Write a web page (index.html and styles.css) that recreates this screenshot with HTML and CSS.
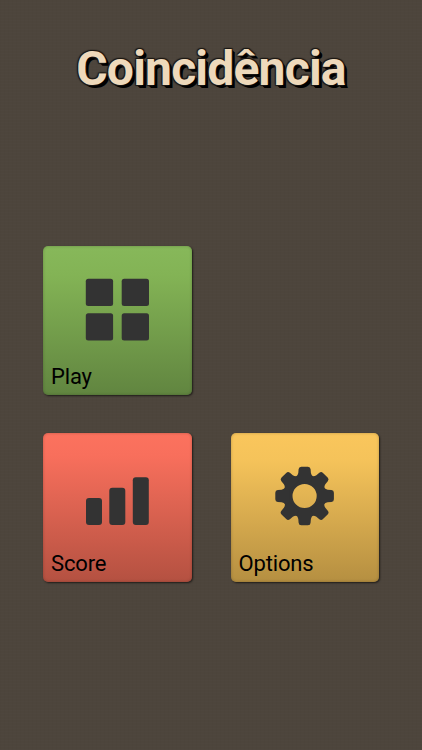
FILE: index.html
```
<!DOCTYPE html>
<html lang="pt">
<head>
  <meta charset="UTF-8">
  <title>Coincidência</title>
  <meta name="viewport" content="width=device-width, initial-scale=1">
  <link rel="stylesheet" href="styles.css">
</head>
<body>
  <h1 class="title">Coincidência</h1>
  <nav class="menu">
    <a class="tile play">
      <svg class="icon" viewBox="0 0 68 68">
        <rect x="2.8" y="5.8" width="27.3" height="27.3" rx="2.5"/>
        <rect x="38.7" y="5.8" width="27.3" height="27.3" rx="2.5"/>
        <rect x="2.8" y="40.2" width="27.3" height="27.3" rx="2.5"/>
        <rect x="38.7" y="40.2" width="27.3" height="27.3" rx="2.5"/>
      </svg>
      <span class="label">Play</span>
    </a>
    <a class="tile score">
      <svg class="icon" viewBox="0 0 68 68">
        <rect x="3" y="38" width="16" height="27" rx="3"/>
        <rect x="26.3" y="27.8" width="16" height="37.2" rx="3"/>
        <rect x="49.8" y="17.3" width="16" height="47.7" rx="3"/>
      </svg>
      <span class="label">Score</span>
    </a>
    <a class="tile options">
      <svg class="icon" viewBox="0 0 68 68">
        <defs>
          <path id="tooth" d="M-6 -26.8Q-5.8 -29.3 -3.3 -29.3H3.3Q5.8 -29.3 6 -26.8L6.3 -23Q6.6 -20.6 9 -19L6 -15H-6L-9 -19Q-6.6 -20.6 -6.3 -23Z"/>
        </defs>
        <g transform="translate(33.6 36)">
          <circle class="ring" r="16.4"/>
          <use href="#tooth"/>
          <use href="#tooth" transform="rotate(45)"/>
          <use href="#tooth" transform="rotate(90)"/>
          <use href="#tooth" transform="rotate(135)"/>
          <use href="#tooth" transform="rotate(180)"/>
          <use href="#tooth" transform="rotate(225)"/>
          <use href="#tooth" transform="rotate(270)"/>
          <use href="#tooth" transform="rotate(315)"/>
        </g>
      </svg>
      <span class="label">Options</span>
    </a>
  </nav>
</body>
</html>
```

FILE: styles.css
```
* { box-sizing: border-box; }
body {
  margin: 0; height: 750px; overflow: hidden; font-family: Roboto, "Open Sans", sans-serif;
  background-color: #4d453c;
  /* faint paper weave */
  background-image:
    repeating-linear-gradient(0deg, rgba(255,255,255,0.008) 0 1px, transparent 1px 3px),
    repeating-linear-gradient(90deg, rgba(0,0,0,0.012) 0 1px, transparent 1px 4px);
}
.title {
  margin: 0; padding-top: 41px; height: 246px; text-align: center;
  font-size: 48px; line-height: 56px; font-weight: bold; letter-spacing: -0.8px; color: #eed9bb;
  text-shadow: -1px -1px 1px #1c1814, 1px -1px 1px #1c1814, -1px 1px 1px #1c1814, 1px 1px 0 #000, 2px 2px 0 #000, 3px 3px 0 #000;
}
.menu { display: grid; grid-template-columns: 149px 148.5px; grid-auto-rows: 148.5px; column-gap: 38.5px; row-gap: 38.5px; padding-left: 43px; }
.tile {
  display: flex; flex-direction: column; justify-content: space-between; padding: 27px 8px 5px;
  border-radius: 5px; color: #000;
  box-shadow: 1px 1px 2px rgba(0,0,0,0.6), inset 0 0 3px rgba(0,0,0,0.25);
}
.play { background: linear-gradient(#87b85a, #83b355 20%, #618540); }
.score { grid-column: 1; background: linear-gradient(#fc725e, #f86f5c 15%, #b45141); }
.options { background: linear-gradient(#fac65c, #f5c35a 18%, #b58f41); }
.icon { width: 68px; height: 68px; margin-left: 32px; fill: #333; }
.ring { fill: none; stroke: #333; stroke-width: 8.6; }
.label { font-size: 22px; line-height: 26px; letter-spacing: -0.15px; }
```
